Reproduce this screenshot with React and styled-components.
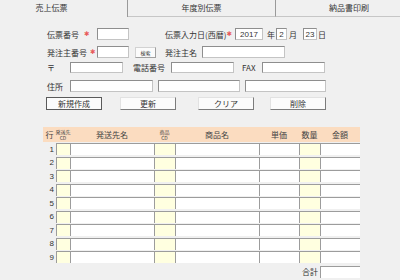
import React from "react";
import styled, { createGlobalStyle } from "styled-components";

const GlobalStyle = createGlobalStyle`
  html, body {
    margin: 0;
    padding: 0;
    background: #f0f0f0;
  }
  body {
    font-family: "Noto Sans CJK JP", "Noto Sans", sans-serif;
    font-size: 8px;
    color: #333;
  }
`;

const Page = styled.div`
  width: 400px;
  height: 280px;
  overflow: hidden;
`;

const TabBar = styled.div`
  display: flex;
  height: 17px;
`;

const Tab = styled.div`
  box-sizing: border-box;
  width: ${(p) => p.$w}px;
  flex: none;
  display: flex;
  align-items: center;
  justify-content: center;
  padding: 0 ${(p) => p.$pr || 0}px 2px ${(p) => p.$pl || 0}px;
  border-right: ${(p) => (p.$sep ? "1px solid #9a9a9a" : "none")};
  border-bottom: ${(p) => (p.$active ? "none" : "1px solid #c6c6c6")};
  font-size: 8px;
  color: #333;
`;

const Row = styled.div`
  display: flex;
  align-items: center;
  height: ${(p) => p.$h || 12}px;
  margin-top: ${(p) => p.$mt}px;
  padding-left: ${(p) => p.$pl || 47}px;
`;

const Label = styled.span`
  flex: none;
  display: flex;
  align-items: center;
  width: ${(p) => p.$w}px;
  margin-left: ${(p) => p.$ml || 0}px;
  white-space: nowrap;
  font-size: 8px;
`;

const Req = styled.span`
  color: #e85a5a;
  margin-left: ${(p) => p.$gap}px;
  font-family: "DejaVu Sans", sans-serif;
  font-size: 6.5px;
`;

const Unit = styled.span`
  flex: none;
  margin-left: ${(p) => p.$ml || 0}px;
  font-size: 8px;
`;

const Field = styled.input`
  box-sizing: border-box;
  flex: none;
  width: ${(p) => p.$w}px;
  height: ${(p) => p.$h || 12}px;
  margin: 0 0 0 ${(p) => p.$ml || 0}px;
  padding: 0 1px;
  background: #fff;
  border: 1px solid #c4c4c4;
  border-top-color: #8e8e8e;
  border-left-color: #8e8e8e;
  font-family: "Liberation Sans", sans-serif;
  font-size: 8px;
  color: #333;
  text-align: center;
  outline: none;
`;

const SmallButton = styled.div`
  box-sizing: border-box;
  flex: none;
  width: ${(p) => p.$w}px;
  height: 11px;
  margin-left: ${(p) => p.$ml || 0}px;
  display: flex;
  align-items: center;
  justify-content: center;
  background: #fbfbfb;
  border: 1px solid #d2d2d2;
  border-right-color: #a0a0a0;
  border-bottom-color: #a0a0a0;
  font-size: 5px;
`;

const Button = styled.div`
  box-sizing: border-box;
  flex: none;
  width: 56px;
  height: 13px;
  margin-left: ${(p) => p.$ml || 0}px;
  display: flex;
  align-items: center;
  justify-content: center;
  background: #fbfbfb;
  border: 1px solid ${(p) => (p.$primary ? "#5a5a5a" : "#e2e2e2")};
  border-right-color: ${(p) => (p.$primary ? "#5a5a5a" : "#7c7c7c")};
  border-bottom-color: ${(p) => (p.$primary ? "#5a5a5a" : "#7c7c7c")};
  font-size: 8px;
  color: #333;
`;

const Table = styled.div`
  margin: 17px 0 0 43px;
  width: 317px;
`;

const cols = "13px 14px 84px 21px 84px 40px 21px 40px";

const HeadRow = styled.div`
  display: grid;
  grid-template-columns: ${cols};
  height: 15px;
  background: #fbdcc0;
`;

const HeadCell = styled.div`
  display: flex;
  flex-direction: column;
  align-items: center;
  justify-content: center;
  white-space: nowrap;
  font-size: ${(p) => (p.$small ? 5 : 8)}px;
  line-height: ${(p) => (p.$small ? "6px" : "normal")};
  color: #444;
`;

const Body = styled.div`
  margin-top: 1px;
`;

const BodyRow = styled.div`
  display: grid;
  grid-template-columns: ${cols};
  height: 13.5px;
`;

const RowNum = styled.div`
  height: 12px;
  display: flex;
  align-items: center;
  justify-content: flex-end;
  padding-right: 2px;
  font-family: "Liberation Sans", sans-serif;
  font-size: 8px;
  color: #333;
`;

const Cell = styled.div`
  box-sizing: border-box;
  height: 12px;
  background: ${(p) => (p.$yellow ? "#ffffe0" : "#fff")};
  border-top: 1px solid #9c9c9c;
  border-left: 1px solid #9c9c9c;
`;

const TotalRow = styled.div`
  display: flex;
  align-items: center;
  justify-content: flex-end;
  width: 360px;
  height: 12px;
  margin-top: 1px;
`;

const TotalBox = styled.div`
  box-sizing: border-box;
  width: 40px;
  height: 12px;
  margin-left: 2px;
  background: #fff;
  border-top: 1px solid #9c9c9c;
  border-left: 1px solid #9c9c9c;
`;

const yellowCols = [true, false, true, false, false, true, false];

export default () => {
  const rows = [1, 2, 3, 4, 5, 6, 7, 8, 9];

  return (
    <Page>
      <GlobalStyle />
      <TabBar>
        <Tab $w={128} $pr={24} $sep $active>
          売上伝票
        </Tab>
        <Tab $w={148} $sep>
          年度別伝票
        </Tab>
        <Tab $w={124} $pl={22}>
          納品書印刷
        </Tab>
      </TabBar>

      <Row $mt={11}>
        <Label $w={50}>
          伝票番号<Req $gap={5}>✱</Req>
        </Label>
        <Field $w={32} readOnly />
        <Label $w={70} $ml={36}>
          伝票入力日(西暦)<Req $gap={0}>✱</Req>
        </Label>
        <Field $w={28} readOnly defaultValue="2017" />
        <Unit $ml={4}>年</Unit>
        <Field $w={11} $ml={1} readOnly defaultValue="2" />
        <Unit $ml={2}>月</Unit>
        <Field $w={14} $ml={6} readOnly defaultValue="23" />
        <Unit $ml={1}>日</Unit>
      </Row>

      <Row $mt={6}>
        <Label $w={50}>
          発注主番号<Req $gap={3}>✱</Req>
        </Label>
        <Field $w={32} readOnly />
        <SmallButton $w={21} $ml={6}>
          検索
        </SmallButton>
        <Label $w={37} $ml={9}>
          発注主名
        </Label>
        <Field $w={83} readOnly />
      </Row>

      <Row $mt={3}>
        <Label $w={23}>〒</Label>
        <Field $w={53} $h={11} readOnly />
        <Label $w={38} $ml={10}>
          電話番号
        </Label>
        <Field $w={63} $h={11} readOnly />
        <Label $w={20} $ml={8}>
          FAX
        </Label>
        <Field $w={63} $h={11} readOnly />
      </Row>

      <Row $mt={7}>
        <Label $w={23}>住所</Label>
        <Field $w={83} readOnly />
        <Field $w={82} $ml={5} readOnly />
        <Field $w={81} $ml={5} readOnly />
      </Row>

      <Row $mt={5} $h={13} $pl={46}>
        <Button $primary>新規作成</Button>
        <Button $ml={18}>更新</Button>
        <Button $ml={22}>クリア</Button>
        <Button $ml={16}>削除</Button>
      </Row>

      <Table>
        <HeadRow>
          <HeadCell>行</HeadCell>
          <HeadCell $small>
            <span>発送先</span>
            <span>CD</span>
          </HeadCell>
          <HeadCell>発送先名</HeadCell>
          <HeadCell $small>
            <span>商品</span>
            <span>CD</span>
          </HeadCell>
          <HeadCell>商品名</HeadCell>
          <HeadCell>単価</HeadCell>
          <HeadCell>数量</HeadCell>
          <HeadCell>金額</HeadCell>
        </HeadRow>
        <Body>
          {rows.map((n) => (
            <BodyRow key={n}>
              <RowNum>{n}</RowNum>
              {yellowCols.map((y, i) => (
                <Cell key={i} $yellow={y} />
              ))}
            </BodyRow>
          ))}
        </Body>
      </Table>

      <TotalRow>
        <Unit>合計</Unit>
        <TotalBox />
      </TotalRow>
    </Page>
  );
};
